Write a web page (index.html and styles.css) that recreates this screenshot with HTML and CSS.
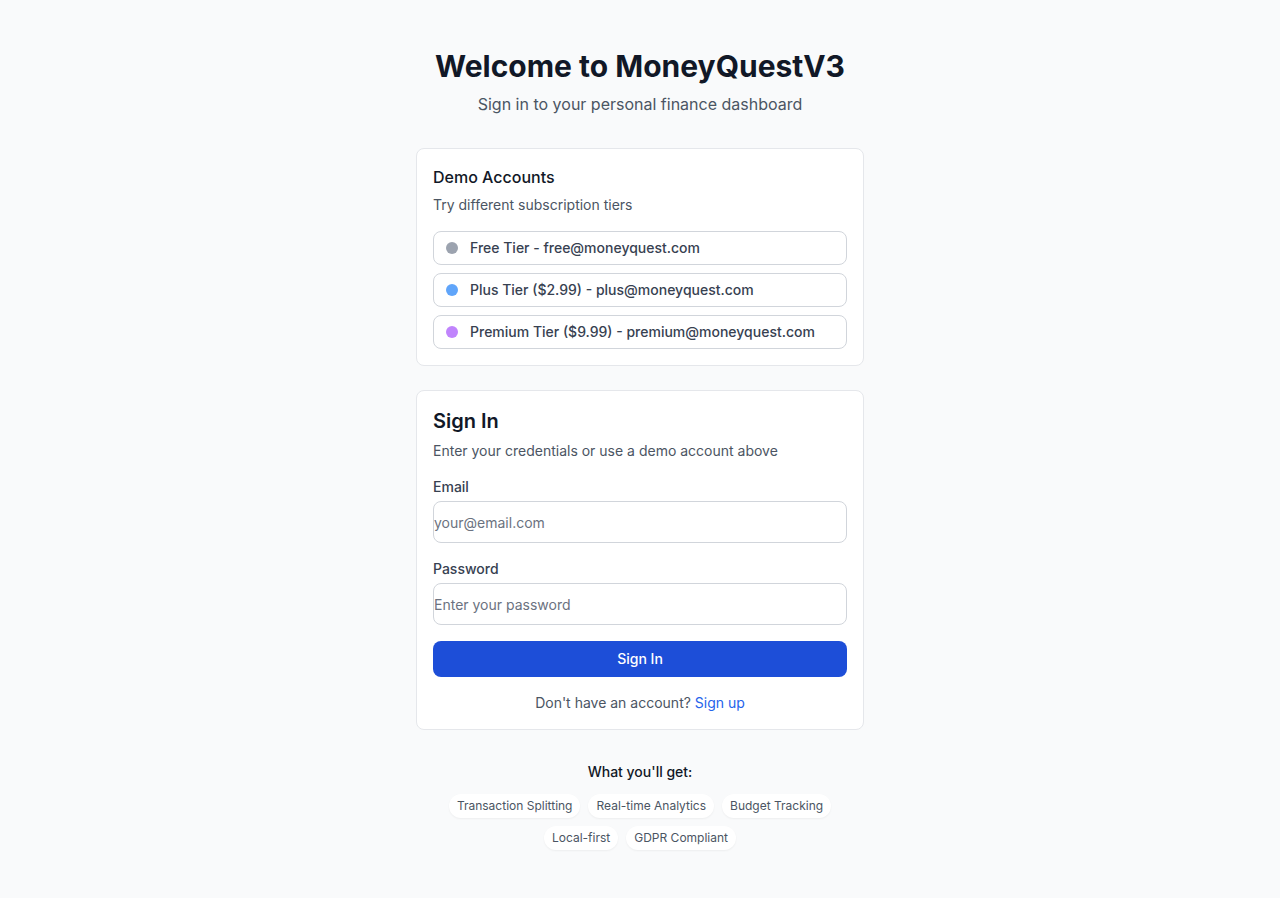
FILE: index.html
```html
<!DOCTYPE html>
<html lang="en">
<head>
<meta charset="utf-8">
<meta name="viewport" content="width=device-width, initial-scale=1">
<title>MoneyQuestV3 - Sign In</title>
<link rel="stylesheet" href="styles.css">
</head>
<body>
<main class="page">
  <div class="column">
    <header class="intro">
      <h1 class="intro-title">Welcome to MoneyQuestV3</h1>
      <p class="intro-text">Sign in to your personal finance dashboard</p>
    </header>

    <section class="card">
      <h2 class="demo-title">Demo Accounts</h2>
      <p class="card-text demo-text">Try different subscription tiers</p>
      <div class="demo-list">
        <button type="button" class="demo-button"><span class="dot dot-free"></span>Free Tier - free@moneyquest.com</button>
        <button type="button" class="demo-button"><span class="dot dot-plus"></span>Plus Tier ($2.99) - plus@moneyquest.com</button>
        <button type="button" class="demo-button"><span class="dot dot-premium"></span>Premium Tier ($9.99) - premium@moneyquest.com</button>
      </div>
    </section>

    <section class="card">
      <h2 class="signin-title">Sign In</h2>
      <p class="card-text">Enter your credentials or use a demo account above</p>
      <form class="form">
        <div class="field">
          <label class="label" for="email">Email</label>
          <input class="input" id="email" type="email" placeholder="your@email.com">
        </div>
        <div class="field">
          <label class="label" for="password">Password</label>
          <input class="input" id="password" type="password" placeholder="Enter your password">
        </div>
        <button type="submit" class="submit">Sign In</button>
      </form>
      <p class="signup">Don't have an account? <a class="link" href="#signup">Sign up</a></p>
    </section>

    <section class="features">
      <h3 class="features-title">What you'll get:</h3>
      <ul class="tags">
        <li class="tag">Transaction Splitting</li>
        <li class="tag">Real-time Analytics</li>
        <li class="tag">Budget Tracking</li>
        <li class="tag">Local-first</li>
        <li class="tag">GDPR Compliant</li>
      </ul>
    </section>
  </div>
</main>
</body>
</html>
```

FILE: styles.css
```css
*, *::before, *::after { box-sizing: border-box; }

body {
  margin: 0;
  background: #f9fafb;
  color: #111827;
  font-family: Inter, "Liberation Sans", sans-serif;
  font-size: 16px;
  line-height: 24px;
}

h1, h2, h3, p, ul { margin: 0; padding: 0; }

button, input { font: inherit; }

.page {
  display: flex;
  align-items: center;
  justify-content: center;
  min-height: 100vh;
  padding: 48px 16px;
}

.column { width: 100%; max-width: 448px; }

.intro { margin-bottom: 32px; text-align: center; }

.intro-title {
  margin-bottom: 8px;
  font-size: 30px;
  font-weight: 700;
  line-height: 36px;
}

.intro-text { color: #4b5563; }

.card {
  margin-bottom: 24px;
  padding: 16px;
  border: 1px solid #e5e7eb;
  border-radius: 8px;
  background: #fff;
}

.demo-title {
  margin-bottom: 6px;
  font-size: 16px;
  font-weight: 500;
  line-height: 24px;
}

.signin-title {
  margin-bottom: 6px;
  font-size: 20px;
  font-weight: 600;
  line-height: 28px;
}

.card-text {
  color: #4b5563;
  font-size: 14px;
  line-height: 20px;
}

.demo-text { margin-bottom: 16px; }

.demo-list { display: grid; gap: 8px; }

.demo-button {
  display: flex;
  align-items: center;
  gap: 12px;
  width: 100%;
  padding: 6px 12px;
  border: 1px solid #d1d5db;
  border-radius: 8px;
  background: #fff;
  color: #374151;
  font-size: 14px;
  font-weight: 500;
  line-height: 20px;
  text-align: left;
}

.dot { width: 12px; height: 12px; border-radius: 50%; }
.dot-free { background: #9ca3af; }
.dot-plus { background: #60a5fa; }
.dot-premium { background: #c084fc; }

.form { display: grid; gap: 16px; margin-top: 16px; }

.field { display: grid; gap: 4px; }

.label {
  color: #374151;
  font-size: 14px;
  font-weight: 500;
  line-height: 20px;
}

.input {
  width: 100%;
  height: 42px;
  padding: 0;
  border: 1px solid #d1d5db;
  border-radius: 8px;
  background: #fff;
  color: #111827;
  font-size: 14px;
  line-height: 20px;
}

.input::placeholder { color: #6b7280; opacity: 1; }

.submit {
  padding: 8px 16px;
  border: 0;
  border-radius: 8px;
  background: #1d4ed8;
  color: #fff;
  font-size: 14px;
  font-weight: 500;
  line-height: 20px;
}

.signup {
  margin-top: 16px;
  color: #4b5563;
  font-size: 14px;
  line-height: 20px;
  text-align: center;
}

.link { color: #2563eb; text-decoration: none; }

.features { margin-top: 32px; text-align: center; }

.features-title {
  margin-bottom: 12px;
  font-size: 14px;
  font-weight: 500;
  line-height: 20px;
}

.tags {
  display: flex;
  flex-wrap: wrap;
  justify-content: center;
  gap: 8px;
  list-style: none;
}

.tag {
  padding: 4px 8px;
  border-radius: 12px;
  background: #fff;
  box-shadow: 0 1px 2px rgba(0, 0, 0, 0.05);
  color: #4b5563;
  font-size: 12px;
  line-height: 16px;
}
```
